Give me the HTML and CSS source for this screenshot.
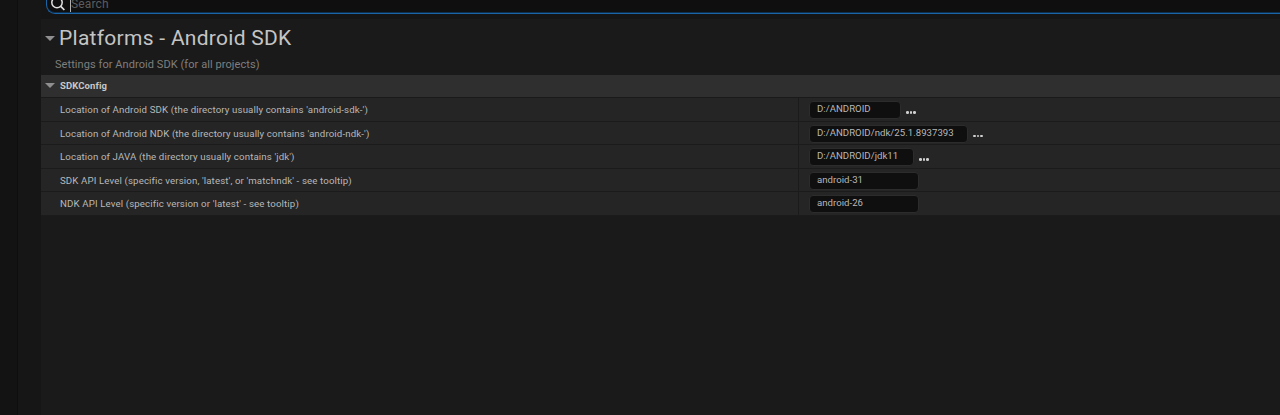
FILE: index.html
```html
<!DOCTYPE html>
<html lang="en">
<head>
<meta charset="utf-8">
<title>Platforms - Android SDK</title>
<link rel="stylesheet" href="styles.css">
</head>
<body>
<div class="app">
  <div class="rail-a"></div>
  <div class="rail-b"></div>
  <main class="main">
    <div class="search-strip">
      <div class="search">
        <svg class="search-icon" width="16" height="14" viewBox="0 0 16 14"><circle cx="7" cy="4.5" r="5.2" fill="none" stroke="#e0e0e0" stroke-width="1.5"/><path d="M10.8 8.3l3.6 3.7" stroke="#e0e0e0" stroke-width="1.7" fill="none"/></svg>
        <span class="caret"></span>
        <span class="placeholder">Search</span>
      </div>
    </div>
    <section class="panel">
      <div class="title-row">
        <span class="tri tri-title"></span>
        <h1 class="title">Platforms - Android SDK</h1>
      </div>
      <p class="subtitle">Settings for Android SDK (for all projects)</p>
      <div class="cat-row">
        <span class="tri tri-cat"></span>
        <span class="cat-label">SDKConfig</span>
      </div>
      <div class="row r1">
        <div class="label">Location of Android SDK (the directory usually contains 'android-sdk-')</div>
        <div class="value"><div class="input w-sdk">D:/ANDROID</div><span class="dots"><i></i><i></i><i></i></span></div>
      </div>
      <div class="row r2">
        <div class="label">Location of Android NDK (the directory usually contains 'android-ndk-')</div>
        <div class="value"><div class="input w-ndk">D:/ANDROID/ndk/25.1.8937393</div><span class="dots"><i></i><i></i><i></i></span></div>
      </div>
      <div class="row r3">
        <div class="label">Location of JAVA (the directory usually contains 'jdk')</div>
        <div class="value"><div class="input w-jdk">D:/ANDROID/jdk11</div><span class="dots"><i></i><i></i><i></i></span></div>
      </div>
      <div class="row r4">
        <div class="label">SDK API Level (specific version, 'latest', or 'matchndk' - see tooltip)</div>
        <div class="value"><div class="input w-api">android-31</div></div>
      </div>
      <div class="row r5">
        <div class="label">NDK API Level (specific version or 'latest' - see tooltip)</div>
        <div class="value"><div class="input w-api">android-26</div></div>
      </div>
    </section>
  </main>
</div>
</body>
</html>
```
FILE: styles.css
```css
* { box-sizing: border-box; }
html, body { margin: 0; height: 100%; overflow: hidden; background: #1a1a1a; }
body { font-family: Roboto, "Liberation Sans", sans-serif; color: #c0c0c0; }
.app { display: flex; height: 415px; }
.rail-a { width: 18px; background: #131313; border-right: 1px solid #0e0e0e; }
.rail-b { width: 23px; background: #161616; }
.main { flex: 1; min-width: 0; display: flex; flex-direction: column; background: #1a1a1a; }
.search-strip { height: 19px; background: #151515; padding-left: 5px; }
.search { height: 14px; background: #0f0f0f; border: 1px solid #1a64a8; border-top: 0; border-right: 0; border-bottom-left-radius: 9px; display: flex; align-items: flex-end; padding-left: 3px; overflow: hidden; box-shadow: inset 0 -1px 0 #0f2f4f; }
.search-icon { flex: none; margin-bottom: 1px; }
.caret { width: 1px; height: 12px; background: #b0b0b0; margin-left: 4px; flex: none; margin-bottom: 1px; }
.placeholder { font-size: 12px; line-height: 12px; color: #5c5c5c; letter-spacing: .15px; margin-bottom: 3px; }
.panel { flex: 1; }
.title-row { display: flex; align-items: center; height: 31px; padding-left: 4px; margin-top: 4px; margin-bottom: -1px; }
.tri { width: 0; height: 0; border-left: 5px solid transparent; border-right: 5px solid transparent; border-top: 5.5px solid #8f8f8f; flex: none; }
.title { margin: 0 0 0 4px; font-size: 21px; font-weight: 400; letter-spacing: .28px; line-height: 31px; color: #c4c4c4; }
.subtitle { margin: 0; height: 22px; padding: 4px 0 0 14px; font-size: 11px; line-height: 16px; letter-spacing: .07px; color: #7f7f7f; }
.cat-row { height: 23px; display: flex; align-items: center; background: #2f2f2f; border-bottom: 1px solid #1a1a1a; padding: 0 0 1px 4px; }
.cat-label { margin-left: 5px; font-size: 9.5px; font-weight: 700; letter-spacing: .1px; color: #c8c8c8; }
.row { display: flex; height: 23.6px; background: #252525; border-bottom: 1px solid #1b1b1b; }
.label { width: 758px; padding: 4px 0 0 19px; font-size: 9.7px; line-height: 16px; letter-spacing: .12px; color: #b8b8b8; border-right: 1px solid #1b1b1b; white-space: nowrap; }
.value { flex: 1; display: flex; align-items: flex-start; padding: 3px 0 0 10px; }
.input { height: 18px; background: #0f0f0f; border: 1px solid #2c2c2c; border-radius: 4px; padding-left: 7px; font-size: 9.6px; line-height: 13.5px; letter-spacing: .03px; color: #b8b8b8; white-space: nowrap; }
.w-sdk { width: 92px; }
.w-ndk { width: 159px; }
.w-jdk { width: 105px; }
.w-api { width: 110px; }
.dots { display: flex; gap: 1px; margin: 10px 0 0 5px; }
.dots i { width: 2.5px; height: 2.5px; border-radius: 50%; background: #d0d0d0; display: block; }
```
